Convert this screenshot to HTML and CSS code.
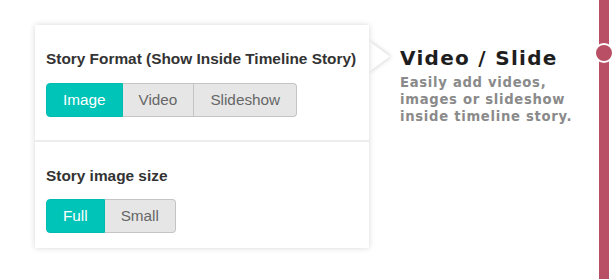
FILE: index.html
```html
<!DOCTYPE html>
<html>
<head>
<meta charset="utf-8">
<link rel="stylesheet" href="styles.css">
</head>
<body>
<div class="page">
  <div class="card">
    <svg class="pointer" width="30" height="40" viewBox="0 0 30 40"><polygon points="0,4 21,19.5 0,35" fill="#fff"/></svg>
    <div class="section first">
      <div class="label">Story Format (Show Inside Timeline Story)</div>
      <div class="group">
        <span class="btn active">Image</span><span class="btn">Video</span><span class="btn">Slideshow</span>
      </div>
    </div>
    <div class="section second">
      <div class="label">Story image size</div>
      <div class="group">
        <span class="btn active">Full</span><span class="btn">Small</span>
      </div>
    </div>
  </div>
  <div class="info">
    <h2 class="title">Video / Slide</h2>
    <p class="desc">Easily add videos,<br>images or slideshow<br>inside timeline story.</p>
  </div>
  <div class="timeline"><span class="dot"></span></div>
</div>
</body>
</html>
```
FILE: styles.css
```css
html {
  background: #fff;
}
body {
  margin: 0;
  padding: 0;
}
.page {
  display: flex;
  align-items: flex-start;
  width: 616px;
  height: 279px;
  overflow: hidden;
}
.card {
  position: relative;
  margin: 25px 0 0 35px;
  width: 334px;
  background: #fff;
  box-shadow: 0 0 6px rgba(0, 0, 0, 0.16);
  font-family: "Liberation Sans", Arial, sans-serif;
}
.pointer {
  position: absolute;
  left: 334px;
  top: 12px;
  z-index: -1;
  filter: drop-shadow(1px 0 2px rgba(0, 0, 0, 0.18));
}
.section.first {
  padding: 24px 11px 23px;
  border-bottom: 2px solid #ececec;
}
.section.second {
  padding: 24px 11px 15px;
}
.label {
  font-size: 15.4px;
  font-weight: bold;
  color: #333;
  line-height: 20px;
  margin-bottom: 14px;
}
.second .label {
  margin-bottom: 13px;
}
.group {
  display: flex;
}
.btn {
  display: block;
  height: 32px;
  line-height: 32px;
  padding: 0 16px;
  font-size: 15.3px;
  color: #666;
  background: #e6e6e6;
  border: 1px solid #c4c4c4;
  border-left-width: 0;
}
.btn:first-child {
  border-left-width: 1px;
  border-radius: 4px 0 0 4px;
}
.btn:last-child {
  border-radius: 0 4px 4px 0;
}
.btn.active {
  background: #00c4b8;
  border-color: #00bcb0;
  color: #fff;
}
.info {
  margin: 46px 0 0 31px;
  font-family: "DejaVu Sans", sans-serif;
}
.title {
  margin: 0;
  font-size: 20px;
  font-weight: bold;
  line-height: 24px;
  letter-spacing: 1.3px;
  color: #1e1e1e;
}
.desc {
  margin: 5px 0 0;
  font-size: 13.2px;
  font-weight: bold;
  line-height: 16.8px;
  letter-spacing: 0.7px;
  color: #8a8a8a;
}
.timeline {
  position: relative;
  margin-left: auto;
  margin-right: 7px;
  width: 10px;
  height: 279px;
  background: #b94f64;
}
.dot {
  position: absolute;
  left: -5px;
  top: 43px;
  width: 16px;
  height: 16px;
  border: 2px solid #fff;
  border-radius: 50%;
  background: #b94f64;
}
```
